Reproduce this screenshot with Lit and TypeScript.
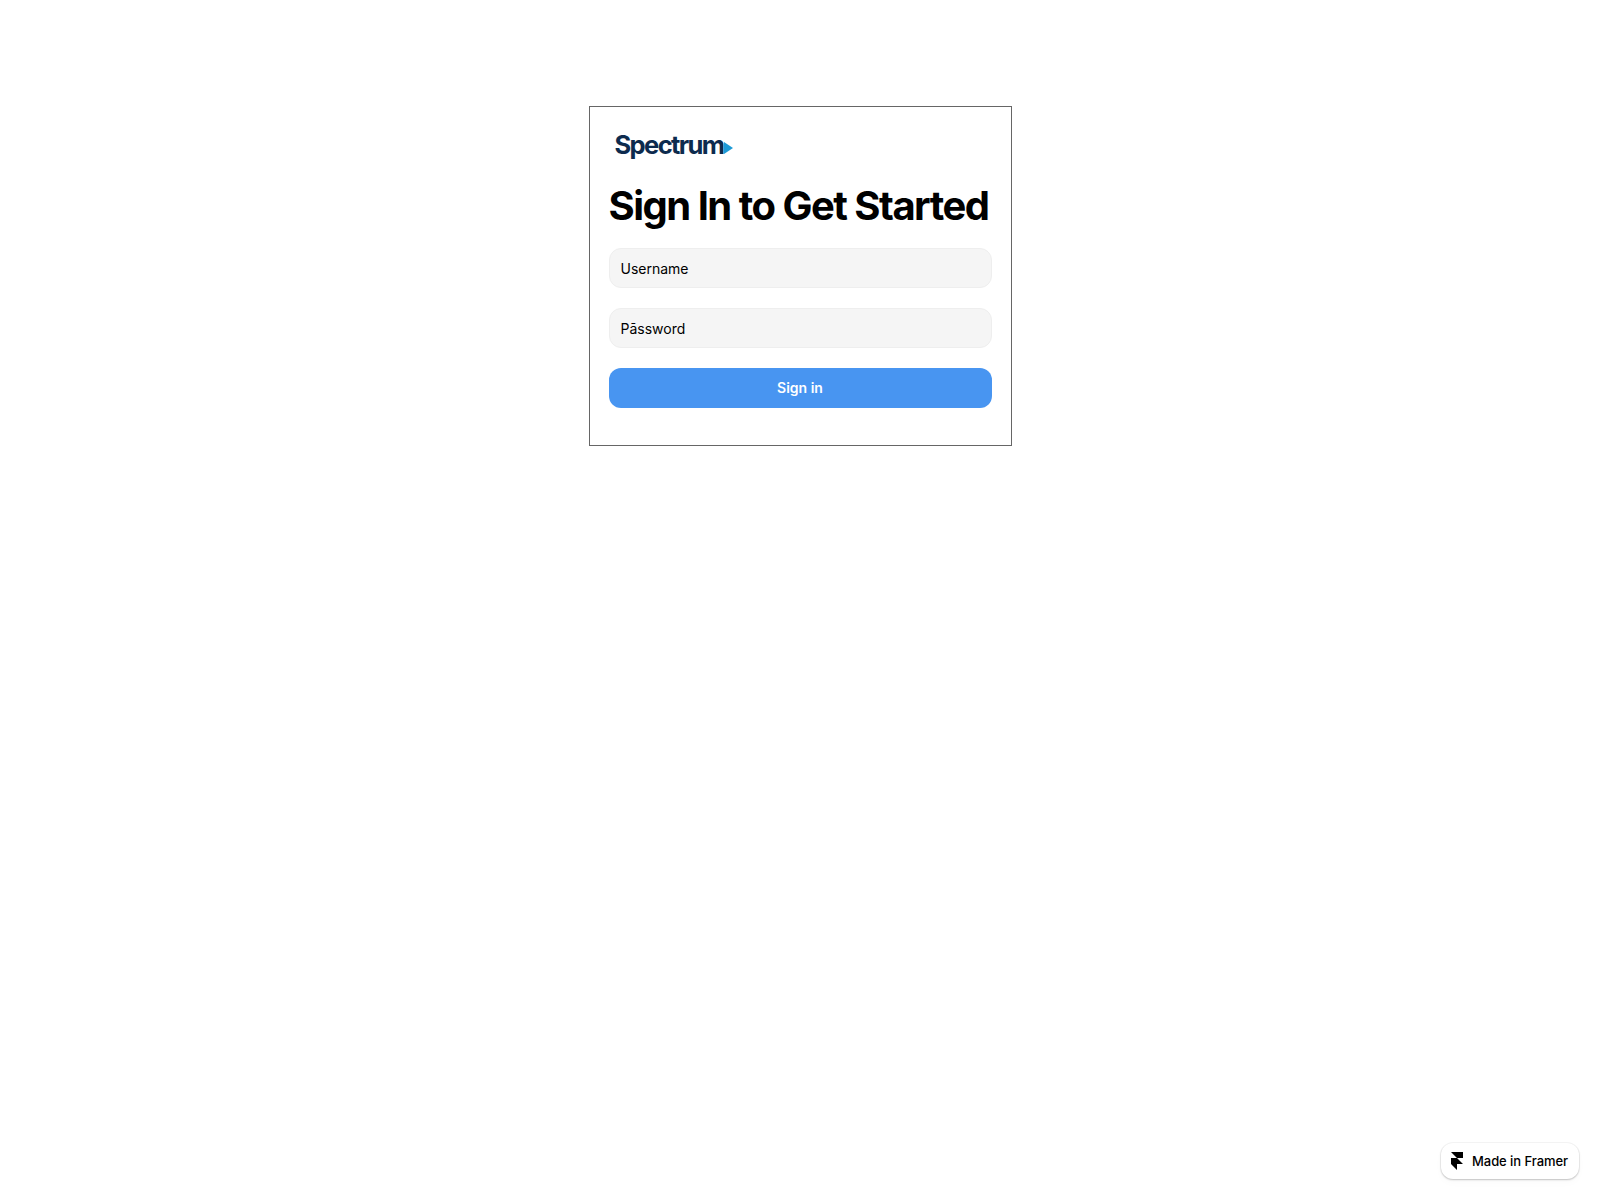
import { LitElement, html, css } from "lit";
import { customElement } from "lit/decorators.js";

@customElement("app-root")
export class AppRoot extends LitElement {
  static styles = css`
    :host {
      display: block;
      min-height: 1200px;
      background: #fff;
      font-family: Inter, "Liberation Sans", sans-serif;
      color: #000;
    }
    .page {
      display: flex;
      justify-content: center;
      padding-top: 106px;
    }
    .card {
      box-sizing: border-box;
      width: 423px;
      height: 340px;
      border: 1px solid #666;
      padding: 20px 19px;
      display: flex;
      flex-direction: column;
    }
    .logo {
      display: flex;
      align-items: flex-end;
      height: 33px;
      padding: 0 0 0 6px;
      box-sizing: border-box;
      color: #0d2b4e;
      font-size: 25.5px;
      font-weight: 700;
      letter-spacing: -1.6px;
      line-height: 30px;
    }
    .logo svg {
      width: 9px;
      height: 12px;
      margin: 0 0 6px 0;
    }
    h1 {
      margin: 22px 0 0;
      font-size: 40px;
      font-weight: 750;
      line-height: 48px;
      letter-spacing: -1.51px;
      white-space: nowrap;
    }
    .form {
      display: flex;
      flex-direction: column;
      gap: 20px;
      margin-top: 18px;
    }
    input {
      box-sizing: border-box;
      width: 100%;
      height: 40px;
      padding: 0 11px;
      border: 1px solid #eeeeee;
      border-radius: 12px;
      background: #f5f5f5;
      font: 400 14px Inter, sans-serif;
      color: #000;
      outline: none;
    }
    input::placeholder {
      color: #000;
      opacity: 1;
    }
    button {
      height: 40px;
      padding: 0 0 2px;
      border: none;
      border-radius: 12px;
      background: #4895f1;
      color: #fff;
      font: 600 14px Inter, sans-serif;
    }
    .badge {
      position: absolute;
      left: 1441px;
      top: 1143px;
      box-sizing: border-box;
      width: 138px;
      height: 36px;
      display: flex;
      align-items: center;
      gap: 9px;
      padding-left: 10px;
      background: #fff;
      border-radius: 12px;
      box-shadow: 0 0 0 1px rgba(0, 0, 0, 0.04), 0 1px 2px rgba(0, 0, 0, 0.2), 0 4px 8px rgba(0, 0, 0, 0.02);
      font-size: 13px;
      font-weight: 500;
      letter-spacing: -0.06px;
      white-space: nowrap;
    }
    .badge svg {
      width: 12px;
      height: 18px;
      flex: none;
    }
  `;

  render() {
    return html`
      <div class="page">
        <div class="card">
          <div class="logo">
            <span>Spectrum</span>
            <svg viewBox="0 0 9 12"><path d="M0 0 L9 6 L0 12 Z" fill="#1d9ad6" /></svg>
          </div>
          <h1>Sign In to Get Started</h1>
          <div class="form">
            <input placeholder="Username" />
            <input placeholder="Pāssword" />
            <button>Sign in</button>
          </div>
        </div>
      </div>
      <div class="badge">
        <svg viewBox="0 0 12 18"><path d="M0 0 H12 V6 H6 Z M0 6 H6 L12 12 H6 V18 L0 12 Z" fill="#000" /></svg>
        <span>Made in Framer</span>
      </div>
    `;
  }
}
